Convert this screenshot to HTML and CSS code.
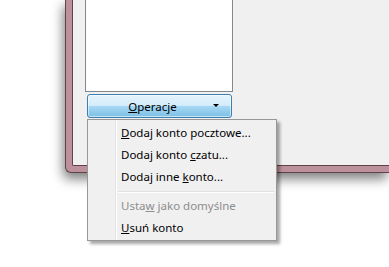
FILE: index.html
```html
<!DOCTYPE html>
<html lang="pl">
<head>
    <meta charset="UTF-8">
    <meta name="viewport" content="width=device-width, initial-scale=1.0">
    <title>Konta</title>
    <link rel="stylesheet" href="styles.css">
</head>
<body>
    <div class="window">
        <div class="client">
            <div class="account-list"></div>
            <button class="split-button">
                <span class="label"><u>O</u>peracje</span>
                <span class="arrow"></span>
            </button>
        </div>
    </div>

    <ul class="menu">
        <li class="item"><u>D</u>odaj konto pocztowe...</li>
        <li class="item">Dodaj konto <u>c</u>zatu...</li>
        <li class="item">Dodaj inne <u>k</u>onto...</li>
        <li class="separator"></li>
        <li class="item disabled">Usta<u>w</u> jako domyślne</li>
        <li class="item"><u>U</u>suń konto</li>
    </ul>
</body>
</html>
```

FILE: styles.css
```css
html, body {
    margin: 0;
    height: 100%;
    overflow: hidden;
}

body {
    background: #ffffff;
    font-family: "Noto Sans", "Open Sans", sans-serif;
    font-size: 11.5px;
    color: #000;
    position: relative;
}

.window {
    margin-left: 65px;
    width: calc(100% - 65px);
    height: 173px;
    background: #bd919b;
    border: 1px solid #5e434b;
    border-top: none;
    border-right: none;
    border-radius: 0 0 0 6px;
    padding: 0 0 6px 6px;
    box-sizing: border-box;
    box-shadow: -2px 6px 12px rgba(0, 0, 0, 0.5);
}

.client {
    height: 166px;
    background: #f0f0f0;
    border: 1px solid #5e434b;
    border-top: none;
    border-right: none;
    border-radius: 0 0 0 2px;
    box-shadow: inset 1px -1px 0 #f7eef0;
    padding-left: 12px;
    box-sizing: border-box;
}

.account-list {
    width: 148px;
    height: 92px;
    background: #fff;
    border: 1px solid #828790;
    border-top: none;
    box-sizing: border-box;
}

.split-button {
    display: flex;
    align-items: center;
    margin: 2px 0 0 2px;
    width: 145px;
    height: 24px;
    padding: 0;
    border: 1px solid #3c7fb1;
    border-radius: 3px;
    background: linear-gradient(#e5f4fc 0%, #d3ecfa 48%, #a6d8f3 52%, #7cc0e5 100%);
    box-shadow: inset 0 0 0 1px rgba(255, 255, 255, 0.55);
    font: inherit;
    color: #000;
    box-sizing: border-box;
}

.split-button .label {
    flex: 1;
    text-align: center;
    padding-left: 4px;
}

.split-button .arrow {
    width: 0;
    height: 0;
    margin: 0 12px 1px 0;
    border-left: 3px solid transparent;
    border-right: 3px solid transparent;
    border-top: 3px solid #000;
}

.menu {
    position: absolute;
    left: 87px;
    top: 119px;
    width: 190px;
    margin: 0;
    padding: 2px 0 1px 0;
    list-style: none;
    background: #f0f0f0 linear-gradient(90deg, transparent 27px, #e2e3e3 27px, #e2e3e3 28px, #fff 28px, #fff 29px, transparent 29px);
    border: 1px solid #979797;
    box-sizing: border-box;
    box-shadow: 3px 3px 3px rgba(0, 0, 0, 0.35);
}

.item {
    height: 22px;
    line-height: 22px;
    padding-left: 33px;
    white-space: nowrap;
}

.item.disabled {
    color: #8d8d8d;
}

.separator {
    height: 1px;
    margin: 3px 2px 2px 30px;
    background: #e0e0e0;
    border-bottom: 1px solid #fff;
}
```
